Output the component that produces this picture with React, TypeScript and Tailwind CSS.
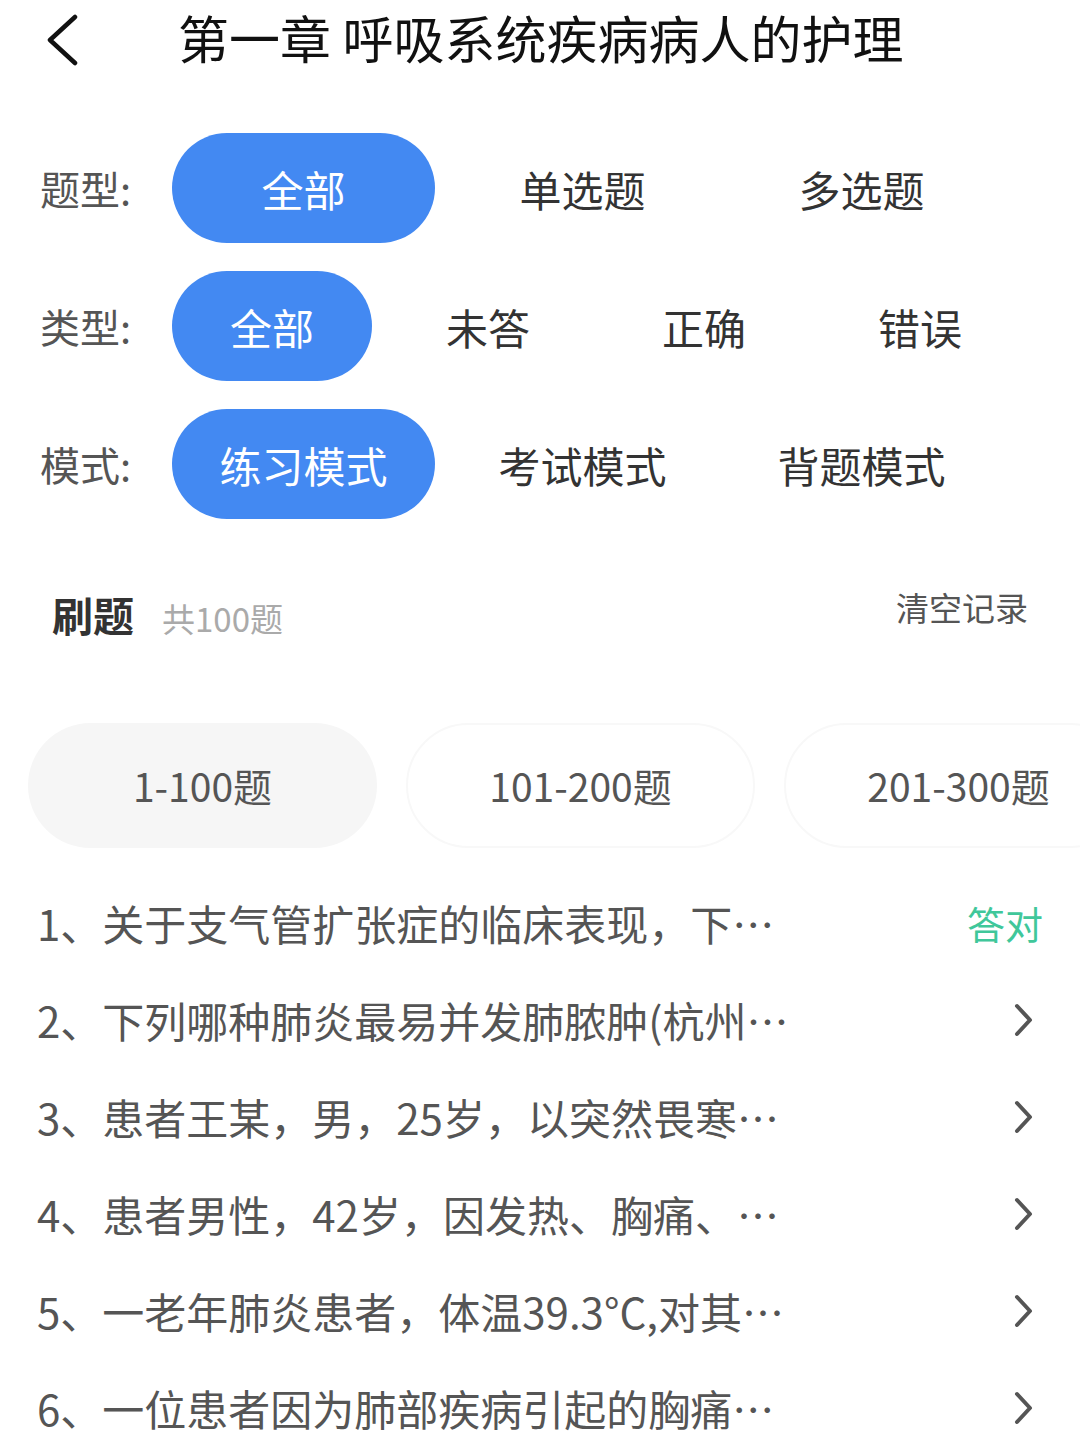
import React from 'react';

const font = { fontFamily: '"Noto Sans CJK SC", "Noto Sans", sans-serif' };

type FilterRow = {
  label: string;
  options: string[];
  width: string;
};

const filters: FilterRow[] = [
  { label: '题型:', options: ['全部', '单选题', '多选题'], width: 'w-[263px]' },
  { label: '类型:', options: ['全部', '未答', '正确', '错误'], width: 'w-[200px]' },
  { label: '模式:', options: ['练习模式', '考试模式', '背题模式'], width: 'w-[263px]' },
];

const ranges = ['1-100题', '101-200题', '201-300题'];

const questions = [
  { text: '1、关于支气管扩张症的临床表现，下…', done: true },
  { text: '2、下列哪种肺炎最易并发肺脓肿(杭州…', done: false },
  { text: '3、患者王某，男，25岁，以突然畏寒…', done: false },
  { text: '4、患者男性，42岁，因发热、胸痛、…', done: false },
  { text: '5、一老年肺炎患者，体温39.3°C,对其…', done: false },
  { text: '6、一位患者因为肺部疾病引起的胸痛…', done: false },
];

function ChevronLeft() {
  return (
    <svg width="34" height="52" viewBox="0 0 34 52" fill="none">
      <path d="M30 3 L5 26 L30 49" stroke="#111" strokeWidth="4.5" strokeLinecap="round" strokeLinejoin="round" />
    </svg>
  );
}

function ChevronRight() {
  return (
    <svg width="20" height="34" viewBox="0 0 20 34" fill="none">
      <path d="M3 3 L16 17 L3 31" stroke="#555" strokeWidth="4" strokeLinecap="round" strokeLinejoin="round" />
    </svg>
  );
}

export default function App() {
  return (
    <div className="w-[1080px] h-[1439px] bg-white overflow-hidden" style={font}>
      {/* header */}
      <div className="relative h-[80px] flex items-center">
        <div className="absolute left-[45px] top-[14px]">
          <ChevronLeft />
        </div>
        <div className="pl-[178px] -mt-[6px] text-[51px] leading-none text-[#111] whitespace-nowrap">
          第一章 呼吸系统疾病病人的护理
        </div>
      </div>

      {/* filters */}
      <div className="mt-[53px] flex flex-col gap-[28px]">
        {filters.map((row) => (
          <div key={row.label} className="flex items-center">
            <div className="w-[172px] pl-[40px] text-[40px] text-[#555]">{row.label}</div>
            <div className="flex gap-[16px]">
              {row.options.map((opt, i) => (
                <div
                  key={opt}
                  className={`${row.width} h-[110px] rounded-full flex items-center justify-center text-[42px] ${
                    i === 0 ? 'bg-[#4389f2] text-white' : 'text-[#333]'
                  }`}
                >
                  {opt}
                </div>
              ))}
            </div>
          </div>
        ))}
      </div>

      {/* section header */}
      <div className="mt-[66px] h-[60px] flex items-center pl-[52px] pr-[52px]">
        <div className="flex items-baseline">
          <span className="text-[41px] font-bold text-[#333]">刷题</span>
          <span className="ml-[28px] text-[33px] text-[#aaa]">共100题</span>
        </div>
        <div className="ml-auto text-[33px] text-[#555] -mt-[14px]">清空记录</div>
      </div>

      {/* ranges */}
      <div className="mt-[78px] flex gap-[29px] pl-[28px] overflow-hidden">
        {ranges.map((r, i) => (
          <div
            key={r}
            className={`shrink-0 w-[349px] h-[125px] rounded-full flex items-center justify-center text-[39px] text-[#555] ${
              i === 0 ? 'bg-[#f6f6f6]' : 'bg-white border-2 border-[#f8f8f8]'
            }`}
          >
            {r}
          </div>
        ))}
      </div>

      {/* questions */}
      <div className="mt-[26px] flex flex-col">
        {questions.map((q) => (
          <div key={q.text} className="h-[97px] flex items-center pl-[37px] pr-[46px]">
            <div className="text-[42px] text-[#555] whitespace-nowrap">{q.text}</div>
            <div className="ml-auto flex items-center">
              {q.done ? (
                <span className="text-[38px] text-[#40c79a] -mr-[9px]">答对</span>
              ) : (
                <ChevronRight />
              )}
            </div>
          </div>
        ))}
      </div>
    </div>
  );
}
